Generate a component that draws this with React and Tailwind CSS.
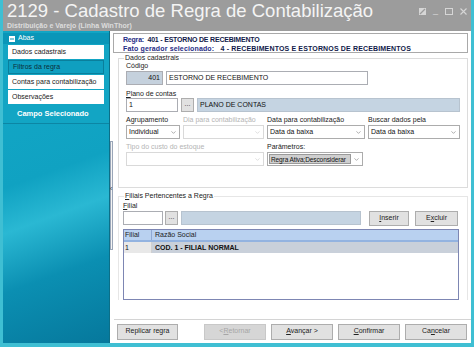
import { ChevronDown } from "lucide-react";

function U({ children }) {
  return <span className="underline">{children}</span>;
}

function Input({ className = "", children }) {
  return (
    <div className={`h-[14px] border border-[#abadb3] bg-white px-[2px] text-[7px] leading-[12px] text-[#111] whitespace-nowrap overflow-hidden ${className}`}>
      {children}
    </div>
  );
}

function Select({ className = "", children, disabled }) {
  return (
    <div
      className={`h-[14px] flex items-center border ${disabled ? "border-[#d9d9d9]" : "border-[#acacac]"} bg-white pl-[2px] text-[7px] text-[#111] ${className}`}
    >
      <span className="flex-1 whitespace-nowrap overflow-hidden">{children}</span>
      <ChevronDown className={`w-[7px] h-[7px] mr-[2px] ${disabled ? "text-[#c8c8c8]" : "text-[#777]"}`} strokeWidth={2} />
    </div>
  );
}

function Dots({ className = "" }) {
  return (
    <div className={`h-[14px] w-[13px] border border-[#adadad] bg-[#e1e1e1] text-[7px] leading-[10px] text-center text-[#333] ${className}`}>...</div>
  );
}

function Btn({ children, disabled, className = "" }) {
  return (
    <div
      className={`h-[16px] flex items-center justify-center border text-[7px] ${
        disabled ? "border-[#c8c8c8] bg-[#d6d6d6] text-[#a6a6a6]" : "border-[#adadad] bg-[#e1e1e1] text-[#222]"
      } ${className}`}
    >
      {children}
    </div>
  );
}

function Label({ children, disabled, className = "" }) {
  return (
    <div className={`text-[7px] leading-[8px] whitespace-nowrap ${disabled ? "text-[#b4b4b4]" : "text-[#222]"} ${className}`}>{children}</div>
  );
}

function SideItem({ children, active }) {
  return (
    <div
      className={`h-[14px] mx-[5px] mb-[1px] flex items-center pl-[4px] text-[7px] whitespace-nowrap ${
        active ? "bg-[#0f9fc0] border border-[#0a7f9c] text-[#0b2f3a]" : "bg-white text-[#222]"
      }`}
    >
      {children}
    </div>
  );
}

export default function App() {
  return (
    <div className="w-[474px] h-[347px] bg-[#3fbfd3] px-[3px] pb-[4px] flex flex-col font-['Liberation_Sans',Arial,sans-serif] overflow-hidden">
      {/* title bar */}
      <div className="h-[31px] bg-[#9c9c9c] flex pl-[4px] pr-[4px] shrink-0">
        <div className="flex-1 pt-[1px]">
          <div className="text-[18.5px] leading-[20px] text-[#f4f4f4] whitespace-nowrap">2129 - Cadastro de Regra de Contabilização</div>
          <div className="text-[7px] leading-[9px] font-bold text-[#dcdcdc]">Distribuição e Varejo (Linha WinThor)</div>
        </div>
        <div className="flex items-start gap-[7px] pt-[8px] text-[#d8d8d8] text-[9px] leading-[9px]">
          <svg width="7" height="7" viewBox="0 0 7 7"><path d="M0 0h7v7H0z" fill="#d6d6d6" /><path d="M1 6L6 1" stroke="#9c9c9c" strokeWidth="1.2" /></svg>
          <span className="-mt-[2px]">_</span>
          <svg width="8" height="7" viewBox="0 0 8 7"><rect x="0.5" y="0.5" width="7" height="6" fill="none" stroke="#d6d6d6" /></svg>
          <svg width="7" height="7" viewBox="0 0 7 7"><path d="M0.5 0.5l6 6M6.5 0.5l-6 6" stroke="#d6d6d6" strokeWidth="1.1" /></svg>
        </div>
      </div>

      <div className="flex flex-1 min-h-0">
        {/* sidebar */}
        <div className="w-[107px] shrink-0 flex flex-col border-r border-[#0b6f88] bg-[linear-gradient(160deg,#13a9c8_0%,#10a2c2_45%,#2ab8d3_58%,#0b8fb2_75%,#06789c_100%)]">
          <div className="bg-[#12a5c4] pt-[2px]">
            <div className="h-[11px] flex items-center gap-[3px] pl-[6px] text-[7px] text-white bg-[#0a96b8]">
              <svg width="6" height="6" viewBox="0 0 6 6"><rect width="6" height="6" fill="#fff" /><rect x="1" y="2.5" width="4" height="1" fill="#0a96b8" /></svg>
              Abas
            </div>
            <div className="pt-[1px]">
              <SideItem>Dados cadastrais</SideItem>
              <SideItem active>Filtros da regra</SideItem>
              <SideItem>Contas para contabilização</SideItem>
              <SideItem>Observações</SideItem>
            </div>
            <div className="h-[19px] flex items-center pl-[14px] text-[7.5px] font-bold text-white border-b border-[#0c86a4]">Campo Selecionado</div>
          </div>
          <div className="flex-1" />
        </div>

        {/* main */}
        <div className="flex-1 bg-white flex flex-col relative">
          <div className="absolute left-0 top-[110px] w-[3px] h-[109px] border border-[#9aa6b8] bg-[#f4f4f4]" />
          <div className="absolute left-0 top-[154px] text-[7px] leading-[7px] text-[#333]">‹</div>

          <div className="mt-[2px] mx-[3px] h-[20px] border border-[#a9a9a9] pl-[9px] text-[7px] font-bold leading-[9px]">
            <div className="pt-[1px] whitespace-nowrap tracking-[-0.2px]"><span className="text-[#1f2d86]">Regra:</span>&nbsp; <span className="text-[#111a4a]">401 - ESTORNO DE RECEBIMENTO</span></div>
            <div className="whitespace-nowrap tracking-[0.15px]"><span className="text-[#1f2d86]">Fato gerador selecionado:</span>&nbsp;&nbsp; <span className="text-[#111a4a]">4 - RECEBIMENTOS E ESTORNOS DE RECEBIMENTOS</span></div>
          </div>

          <fieldset className="ml-[8px] mr-[3px] border border-[#dcdcdc] px-[7px] pb-[21px] pt-0 mt-[1px]">
            <legend className="text-[7px] leading-[8px] text-[#222] px-[1px] ml-[-2px]">Dados cadastrais</legend>
            <Label>Código</Label>
            <div className="flex gap-[3px] mt-[1px]">
              <Input className="w-[37px] !bg-[#c5d1dd] text-right">401</Input>
              <Input className="w-[202px]">ESTORNO DE RECEBIMENTO</Input>
            </div>
            <Label className="mt-[5px]"><U>P</U>lano de contas</Label>
            <div className="flex gap-[3px]">
              <Input className="w-[52px]">1</Input>
              <Dots />
              <Input className="flex-1 !bg-[#c5d4e2] !border-[#b7c3cf]">PLANO DE CONTAS</Input>
            </div>
            <div className="flex gap-[3px] mt-[4px]">
              <div className="w-[54px]"><Label>Agrupamento</Label><Select className="mt-[1px]">Individual</Select></div>
              <div className="w-[81px]"><Label disabled>Dia para contabilização</Label><Select className="mt-[1px]" disabled></Select></div>
              <div className="w-[98px]"><Label>Data para contabilização</Label><Select className="mt-[1px]">Data da baixa</Select></div>
              <div className="flex-1"><Label>Buscar dados pela</Label><Select className="mt-[1px]">Data da baixa</Select></div>
            </div>
            <div className="flex gap-[3px] mt-[4px]">
              <div className="w-[138px]"><Label disabled>Tipo do custo do estoque</Label><Select className="mt-[1px]" disabled></Select></div>
              <div className="w-[96px]">
                <Label>Parâmetros:</Label>
                <div className="mt-[1px] h-[14px] flex border border-[#acacac] bg-white p-[1px]">
                  <div className="flex-1 bg-[#cfcfcf] border border-[#9a9a9a] text-[6.5px] leading-[9px] pl-[1px] whitespace-nowrap text-[#111] tracking-[-0.1px]">Regra Ativa;Desconsiderar</div>
                  <div className="w-[10px] flex items-center justify-center"><ChevronDown className="w-[7px] h-[7px] text-[#777]" strokeWidth={2} /></div>
                </div>
              </div>
            </div>
          </fieldset>

          <fieldset className="ml-[8px] mr-[3px] mt-[4px] border border-[#e6e6e6] border-b-0 px-[4px] pb-0 pt-0">
            <legend className="text-[7px] leading-[8px] text-[#222] px-[1px] ml-[1px]"><U>F</U>iliais Pertencentes a Regra</legend>
            <Label className="mt-[2px]"><U>F</U>ilial</Label>
            <div className="flex mt-[1px]">
              <Input className="w-[40px]"></Input>
              <Dots className="ml-[2px]" />
              <Input className="w-[180px] ml-[3px] !bg-[#c5d4e2] !border-[#b7c3cf]"></Input>
              <Btn className="w-[40px] ml-[8px] !h-[15px]"><U>I</U>nserir</Btn>
              <Btn className="w-[43px] ml-[6px] !h-[15px]">E<U>x</U>cluir</Btn>
            </div>
            <div className="mt-[3px] mr-[4px] h-[71px] border border-[#7d86b3] bg-white">
              <div className="flex h-[12px] bg-[#b9d1f0] border-b-2 border-[#93b3e0] text-[7px] leading-[10px] text-[#222]">
                <div className="w-[28px] pl-[1px] border-r border-[#8fa9d4]">Filial</div>
                <div className="pl-[3px]">Razão Social</div>
              </div>
              <div className="flex h-[11px] text-[7px] leading-[11px] text-[#111] bg-[#c9d0da]">
                <div className="w-[28px] pl-[1px] bg-[#e8e8e8] border-r border-[#d0d0d0]">1</div>
                <div className="pl-[3px] font-bold">COD. 1 - FILIAL NORMAL</div>
              </div>
            </div>
          </fieldset>

          <div className="mt-auto ml-[4px] border-t border-[#d4d4d4] h-[24px] flex items-center px-[3px] gap-[5px]">
            <Btn className="w-[61px]">Replicar regra</Btn>
            <Btn className="w-[62px] ml-[21px]" disabled>&lt; <U>R</U>etornar</Btn>
            <Btn className="w-[62px]"><U>A</U>vançar &gt;</Btn>
            <Btn className="w-[62px]"><U>C</U>onfirmar</Btn>
            <Btn className="w-[62px]">Ca<U>n</U>celar</Btn>
          </div>
        </div>
      </div>
    </div>
  );
}
